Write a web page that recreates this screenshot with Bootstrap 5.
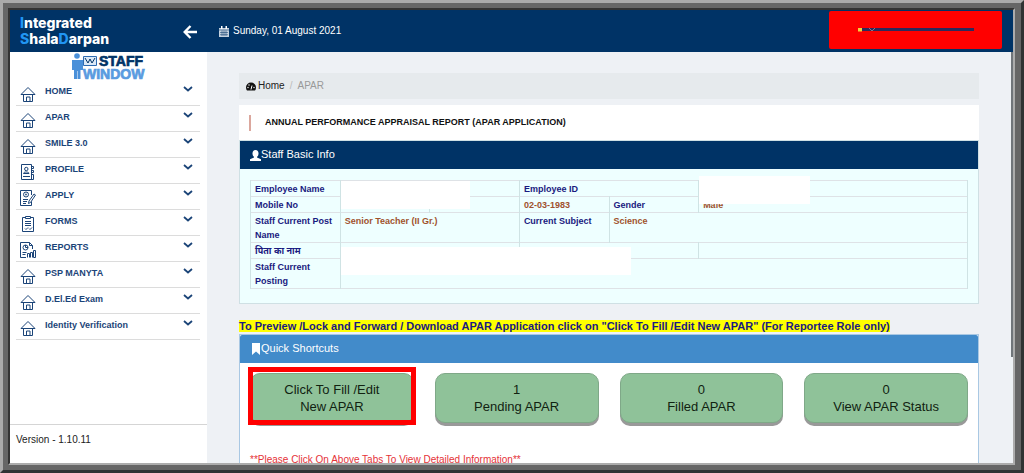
<!DOCTYPE html>
<html lang="en">
<head>
<meta charset="utf-8">
<meta name="viewport" content="width=device-width, initial-scale=1">
<title>Integrated ShalaDarpan - Staff Window</title>
<link rel="stylesheet" href="https://cdn.jsdelivr.net/npm/bootstrap@5.3.0/dist/css/bootstrap.min.css">
<style>
:root{--navy:#003366;--ink:#1b4478}
body{font-family:"Liberation Sans",Arial,"Noto Sans",sans-serif;font-size:10px;line-height:14px;color:#222}
.frame-outer{border:3px solid;border-color:#aaa #303333 #303333 #aaa;background:#666}
.frame-mid{border:5px solid #666;border-right-width:6px}
.frame-inner{border:2px solid;border-color:#333 #acacac #acacac #333}
.topbar{background:var(--navy);height:42px;color:#fff}
.side-w{width:197px}
.brand-text{font-family:Inter,sans-serif;font-weight:800;font-size:14px;line-height:16px;color:#fff;padding-left:2px}
.brand-text b{font-weight:800;color:#2196f3}
.user-btn{background:#f00;border:0;border-radius:2px;width:173px;height:38px;margin-right:11px;margin-bottom:2px}
.logo-link{height:28px}
.side-menu{margin:0 7px 0 6px}
.side-menu .menu-link{height:26px;border-bottom:1px solid #dcdcdc;color:var(--ink);font-size:9px;font-weight:700;text-decoration:none;padding-bottom:3px}
.menu-link .ico{width:16px;height:16px;margin:5px 9px 0 4px}
.menu-link .chev{width:10px;height:6px;margin:0 7px 4px auto}
.ico,.chev{fill:none;stroke:currentColor}
.version{border-top:1px solid #d5d5d5;height:39px;font-size:10px;padding:8px 6px}
.content-area{background:#eef1f5;padding:21px 34px 0 32px}
.scroll-thumb{width:2px;height:305px;right:0;top:0;background:#70757a}
.crumbs{background:#e6eaed;height:26px;font-size:10px;padding-left:7px;margin-bottom:6px;--bs-breadcrumb-item-padding-x:5px;--bs-breadcrumb-divider-color:#bbb;--bs-breadcrumb-item-active-color:#999}
.crumbs a{color:#222;text-decoration:none;gap:2px}
.page-title{height:35px;font-size:9px;font-weight:700;color:#111;padding-left:10px}
.page-title .bar{width:2px;height:16px;background:#dba79d;margin-right:14px}
.panel-head{height:28px;font-size:11px;color:#fff;padding-left:10px}
.info-panel{background:#eff;border:1px solid #cfe0e4}
.info-head{background:var(--navy)}
.info-body{padding:11px 10px 14px}
.info-table{table-layout:fixed;font-size:9px;line-height:14px;font-weight:700;--bs-table-bg:transparent}
.info-table>tbody>tr>*{padding:1px 4px 0;color:#1a1a80;border-color:#cfe3e4}
.info-table>tbody>tr>td{color:#a0522d}
.patch{background:#fff;z-index:1}
.notice{background:#ff0;color:#1a1a80;font-size:11px;font-weight:700;line-height:13px}
.shortcut-panel{background:#fff;border:1px solid #a9c8e3;border-bottom:0}
.shortcut-head{background:#428bca;border-radius:2px 2px 0 0}
.shortcut-body{padding:10px 10px 20px}
.shortcut-row{--bs-gutter-x:21px}
.tile{background:#8fc299;border:1px solid #7fa888;border-radius:10px;box-shadow:0 3px 0 #999;height:50px;font-size:13px;line-height:17px;color:#112211;width:100%;padding:0}
.highlight{position:relative}
.highlight::after{content:"";position:absolute;inset:-6px -2px -2px -2px;border:5px solid #f00}
.hint{color:#e53238;font-size:10px;line-height:14px;margin-top:30px}
</style>
</head>
<body>
<svg class="d-none">
  <symbol id="house" viewBox="0 0 16 16"><path d="M1 8.500 8 1.500l7 7zM3.500 8.500v7h9v-7M6.500 15.500v-4.500h3.500v4.500"/></symbol>
  <symbol id="profile" viewBox="0 0 16 16"><path d="M1.500.5h10v15h-10zM11.500 2.500h2v2h-2M11.500 6.500h2v2h-2M11.500 10.500h2v5h-10M3.500 9.500c0-2 5.500-2 5.500 0zM3 12.500h7"/><circle cx="6.300" cy="5" r="1.700"/></symbol>
  <symbol id="apply" viewBox="0 0 16 16"><path d="M11.500 5V.5H.5v15h11v-4M3 9.500h5M3 11.500h4M3 13.500h3M9 11l5-7 1.500 1-5 7.500-2 1z"/><circle cx="6" cy="4.500" r="2.500"/><circle cx="6" cy="4.500" r=".6"/></symbol>
  <symbol id="forms" viewBox="0 0 16 16"><path d="M5 1.500H2.500v14h11v-14H11M5.500.5h5v2h-5zM5 5.500h6M5 7.500h6M5 9.500h6M5 12.500l1 1 2-2M9 12.500l1 1 2-2"/></symbol>
  <symbol id="reports" viewBox="0 0 16 16"><path d="M6 15.500H.5V.5h9l3 3V7M9.500.5v3h3M2.500 10.500h4M2.500 12.500h3M7.500 15.500v-4h2v4M10.500 15.500v-5h2v5M13.500 15.500v-7h2v7zM5.500 3v2.500H8"/><circle cx="5.500" cy="5.500" r="2.500"/></symbol>
  <symbol id="chev" viewBox="0 0 10 6"><path d="M1 1l4 3.500L9 1" stroke-width="1.800"/></symbol>
</svg>
<div class="frame-outer vh-100 d-flex">
<div class="frame-mid flex-fill d-flex">
<div class="frame-inner flex-fill d-flex flex-column overflow-hidden">
  <header class="topbar d-flex align-items-center flex-shrink-0">
    <div class="side-w d-flex align-items-center justify-content-between flex-shrink-0 ps-2 pe-2">
      <div class="brand-text"><div><b>I</b>ntegrated</div><div><b>S</b>hala<b>D</b>arpan</div></div>
      <button class="btn p-0 border-0 lh-1" type="button" aria-label="Toggle menu"><svg width="18" height="14" viewBox="0 0 18 14" fill="none" stroke="#fff" stroke-width="2.400"><path d="M16 7H4M9.500 1 3.700 7l5.800 6"/></svg></button>
    </div>
    <div class="d-flex align-items-center ps-2 ms-1">
      <svg width="10" height="11" viewBox="0 0 10 11" class="me-1"><path d="M0 2h10v9H0z" fill="#c5d2df"/><path d="M2 0h1.500v3H2zM6.500 0H8v3H6.500z" fill="#fff"/><path d="M0 4h10M1 6.500h8M1 8.700h8M3 4.500V10M5 4.500V10M7 4.500V10" stroke="#003366" stroke-width=".5"/></svg>
      <span>Sunday, 01 August 2021</span>
    </div>
    <button class="user-btn ms-auto" type="button" aria-label="User account"><svg width="116" height="6" viewBox="0 0 116 6" class="d-block mx-auto"><path d="M0 1h116v3H0z" fill="#2d2a5c"/><path d="M0 1h4v3.500H0z" fill="#f2d23c"/><path d="M11 1l3 3 3-3" fill="none" stroke="#7b7b92"/></svg></button>
  </header>
  <div class="d-flex flex-fill overflow-hidden">
    <aside class="side-w bg-white d-flex flex-column flex-shrink-0">
      <a href="#" class="logo-link d-block lh-1" aria-label="Staff Window"><svg width="76" height="32" viewBox="0 0 76 32" class="d-block mx-auto">
        <g fill="#4a90d9"><circle cx="6" cy="4" r="2.800"/><path d="M1 8h11v10h-2.500v9h-3v-8H6v8H3v-9H1z"/></g>
        <path d="M12.500 4.500h13v9h-13z" fill="#dce9f6" stroke="#2e6bb0"/><path d="M14 6l3 5 2-4 2 4 3-5" stroke="#003366" fill="none"/>
        <g font-family="Liberation Sans,Arial,sans-serif" font-weight="700" font-size="14" stroke-width=".7"><text x="28" y="14" fill="#003366" stroke="#003366">STAFF</text><text x="12" y="27" fill="#5a9be0" stroke="#5a9be0">WINDOW</text></g>
      </svg></a>
      <nav class="side-menu d-flex flex-column">
        <a href="#" class="menu-link d-flex align-items-center"><svg class="ico"><use href="#house"/></svg>HOME<svg class="chev"><use href="#chev"/></svg></a>
        <a href="#" class="menu-link d-flex align-items-center"><svg class="ico"><use href="#house"/></svg>APAR<svg class="chev"><use href="#chev"/></svg></a>
        <a href="#" class="menu-link d-flex align-items-center"><svg class="ico"><use href="#house"/></svg>SMILE 3.0<svg class="chev"><use href="#chev"/></svg></a>
        <a href="#" class="menu-link d-flex align-items-center"><svg class="ico"><use href="#profile"/></svg>PROFILE<svg class="chev"><use href="#chev"/></svg></a>
        <a href="#" class="menu-link d-flex align-items-center"><svg class="ico"><use href="#apply"/></svg>APPLY<svg class="chev"><use href="#chev"/></svg></a>
        <a href="#" class="menu-link d-flex align-items-center"><svg class="ico"><use href="#forms"/></svg>FORMS<svg class="chev"><use href="#chev"/></svg></a>
        <a href="#" class="menu-link d-flex align-items-center"><svg class="ico"><use href="#reports"/></svg>REPORTS<svg class="chev"><use href="#chev"/></svg></a>
        <a href="#" class="menu-link d-flex align-items-center"><svg class="ico"><use href="#house"/></svg>PSP MANYTA<svg class="chev"><use href="#chev"/></svg></a>
        <a href="#" class="menu-link d-flex align-items-center"><svg class="ico"><use href="#house"/></svg>D.El.Ed Exam<svg class="chev"><use href="#chev"/></svg></a>
        <a href="#" class="menu-link d-flex align-items-center"><svg class="ico"><use href="#house"/></svg>Identity Verification<svg class="chev"><use href="#chev"/></svg></a>
      </nav>
      <div class="version mt-auto">Version - 1.10.11</div>
    </aside>
    <main class="content-area flex-fill position-relative overflow-hidden">
      <div class="scroll-thumb position-absolute"></div>
      <nav aria-label="breadcrumb">
        <ol class="breadcrumb crumbs align-items-center">
          <li class="breadcrumb-item"><a href="#" class="d-flex align-items-center"><svg width="10" height="9" viewBox="0 0 10 9"><path d="M0 5.500a5 5 0 0 1 10 0c0 1.200-.4 2.200-1 3H1c-.6-.8-1-1.800-1-3z" fill="#111"/><path d="M5 7.500l1-4" stroke="#fff"/><g fill="#fff"><circle cx="2" cy="5.500" r=".7"/><circle cx="3" cy="3" r=".7"/><circle cx="8" cy="5.500" r=".7"/></g></svg>Home</a></li>
          <li class="breadcrumb-item active" aria-current="page">APAR</li>
        </ol>
      </nav>
      <h1 class="page-title bg-white d-flex align-items-center mb-0"><span class="bar"></span>ANNUAL PERFORMANCE APPRAISAL REPORT (APAR APPLICATION)</h1>
      <section class="info-panel mb-3">
        <h2 class="panel-head info-head d-flex align-items-center mb-0"><svg width="11" height="11" viewBox="0 0 11 11" fill="#fff"><ellipse cx="5.500" cy="3.500" rx="3" ry="3.500"/><path d="M4 6h3v1.500l4 1.700V11H0V9.200l4-1.700z"/></svg>Staff Basic Info</h2>
        <div class="info-body">
          <table class="table table-bordered info-table mb-0">
            <colgroup><col><col><col><col><col><col><col><col></colgroup>
            <tbody>
              <tr><th>Employee Name</th><td colspan="2" class="position-relative"><span class="patch position-absolute top-0 start-0" style="width:129px;height:28px"></span></td><th colspan="2">Employee ID</th><td colspan="3" class="position-relative"><span class="patch position-absolute bottom-0 start-0" style="width:111px;height:28px;margin-bottom:-8px"></span></td></tr>
              <tr><th>Mobile No</th><td></td><td></td><td>02-03-1983</td><th>Gender</th><td colspan="3">Male</td></tr>
              <tr><th>Staff Current Post Name</th><td colspan="2">Senior Teacher (II Gr.)</td><th>Current Subject</th><td colspan="4">Science</td></tr>
              <tr><th lang="hi">पिता का नाम</th><td colspan="2" class="position-relative"><span class="patch position-absolute top-0 start-0 mt-1" style="width:290px;height:28px"></span></td><td colspan="2"></td><td colspan="3"></td></tr>
              <tr><th>Staff Current Posting</th><td colspan="7"></td></tr>
            </tbody>
          </table>
        </div>
      </section>
      <p class="mb-0"><span class="notice">To Preview /Lock and Forward / Download APAR Application click on "Click To Fill /Edit New APAR" (For Reportee Role only)</span></p>
      <section class="shortcut-panel">
        <h2 class="panel-head shortcut-head d-flex align-items-center mb-0"><svg width="11" height="12" viewBox="0 0 11 12" fill="#fff"><path d="M2 0h8v12L6 8.500 2 12z"/></svg>Quick Shortcuts</h2>
        <div class="shortcut-body">
          <div class="row row-cols-4 shortcut-row">
            <div class="col"><div class="highlight"><button type="button" class="tile d-block">Click To Fill /Edit<br>New APAR</button></div></div>
            <div class="col"><button type="button" class="tile d-block">1<br>Pending APAR</button></div>
            <div class="col"><button type="button" class="tile d-block">0<br>Filled APAR</button></div>
            <div class="col"><button type="button" class="tile d-block">0<br>View APAR Status</button></div>
          </div>
          <p class="hint mb-0">**Please Click On Above Tabs To View Detailed Information**</p>
        </div>
      </section>
    </main>
  </div>
</div>
</div>
</div>
<script src="https://cdn.jsdelivr.net/npm/bootstrap@5.3.0/dist/js/bootstrap.bundle.min.js"></script>
</body>
</html>
